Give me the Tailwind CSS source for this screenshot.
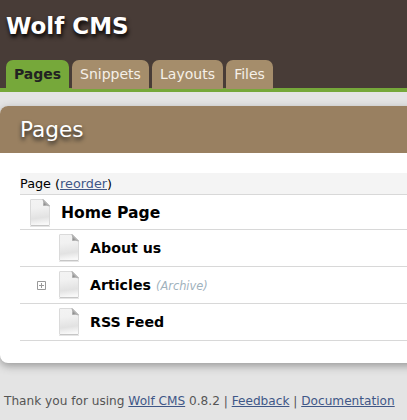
<!DOCTYPE html>
<html lang="en">
<head>
<meta charset="utf-8">
<title>Wolf CMS</title>
<script src="https://cdn.jsdelivr.net/npm/@tailwindcss/browser@4"></script>
</head>
<body class="h-[420px] overflow-hidden bg-[#e4e4e4] font-['DejaVu_Sans',sans-serif] text-black">
<svg class="absolute h-0 w-0">
  <defs>
    <linearGradient id="paper" x1="0" y1="0" x2=".1" y2="1"><stop offset="0" stop-color="#f3f3f3"/><stop offset=".35" stop-color="#f1f1f1"/><stop offset=".75" stop-color="#e2e2e2"/><stop offset="1" stop-color="#f8f8f8"/></linearGradient>
    <linearGradient id="fold" x1="0" y1="1" x2="1" y2="0"><stop offset="0" stop-color="#666"/><stop offset=".4" stop-color="#aaa"/><stop offset=".7" stop-color="#eee"/></linearGradient>
  </defs>
  <symbol id="page" viewBox="0 0 24 30">
    <path d="M2 28.500h20" stroke="#000" stroke-opacity=".1"/>
    <path d="M3 1.500h12.500l6 6v19.500q0 .5-.5.5H3q-.5 0-.5-.5V2q0-.5.5-.5z" fill="url(#paper)" stroke="#dadada"/>
    <path d="M3 27.500h18" stroke="#c6c6c6"/>
    <path d="M15 1.500q1.200 2.500.5 6 3-.6 6 .5z" fill="url(#fold)" stroke="#a8a8a8" stroke-width=".8"/>
  </symbol>
</svg>
<header class="flex h-[92px] flex-col border-b-4 border-[#76a83a] bg-[#483c37]">
  <h1 class="h-[60px] shrink-0 pt-[10px] pl-[6px] text-[23px] leading-[32px] font-bold text-white [text-shadow:1px_3px_4px_#000]">Wolf CMS</h1>
  <nav class="flex h-[29px] shrink-0 gap-[3px] pl-[6px] text-[14px] leading-[29px] text-[#f5f0e8] *:rounded-t-[7px] *:text-center">
    <a class="w-[63px] bg-[#76a83a] font-bold text-[#222]">Pages</a>
    <a class="w-[77px] bg-[#a58d6b]">Snippets</a>
    <a class="w-[71px] bg-[#a58d6b]">Layouts</a>
    <a class="w-[47px] bg-[#a58d6b]">Files</a>
  </nav>
</header>
<main class="mt-[14px] h-[257px] w-[420px] rounded-[8px] bg-white shadow-[0_3px_8px_#999]">
  <h2 class="h-[47px] rounded-t-[8px] bg-[#998061] pl-[20px] text-[21.6px] leading-[47px] text-white [text-shadow:0px_3px_4px_#222]">Pages</h2>
  <div class="ml-[20px] pt-[20px]">
    <div class="h-[22px] border-b border-[#d8d8d8] bg-[#f4f4f4] text-[12.8px] leading-[21px]">Page (<a class="text-[#3f5787] underline">reorder</a>)</div>
    <div class="flex h-[35px] items-center border-b border-[#d8d8d8] pl-[8px]">
      <svg class="mt-[2px] h-[30px] w-[24px]"><use href="#page"/></svg>
      <span class="ml-[9px] pt-[2px] text-[15.6px] leading-[22px] font-bold">Home Page</span>
    </div>
    <div class="flex h-[37px] items-center border-b border-[#d8d8d8] pl-[37px]">
      <svg class="h-[30px] w-[24px]"><use href="#page"/></svg>
      <span class="ml-[9px] text-[14.2px] leading-[20px] font-bold">About us</span>
    </div>
    <div class="flex h-[37px] items-center border-b border-[#d8d8d8] pl-[17px]">
      <svg class="mr-[11px] h-[9px] w-[9px]" viewBox="0 0 9 9" fill="none" stroke="#999"><path d="M.5.5h8v8h-8zM2 4.500h5M4.500 2v5"/></svg>
      <svg class="h-[30px] w-[24px]"><use href="#page"/></svg>
      <span class="ml-[9px] text-[14.2px] leading-[20px] font-bold">Articles</span>
      <em class="ml-[5px] pt-[3px] text-[11.4px] text-[#9fb2bd]">(Archive)</em>
    </div>
    <div class="flex h-[37px] items-center border-b border-[#d8d8d8] pl-[37px]">
      <svg class="h-[30px] w-[24px]"><use href="#page"/></svg>
      <span class="ml-[9px] text-[14.2px] leading-[20px] font-bold">RSS Feed</span>
    </div>
  </div>
</main>
<footer class="mt-[28px] pl-[4px] text-[12.130px] leading-[20px] whitespace-nowrap text-[#555]">Thank you for using <a class="text-[#3f5787] underline">Wolf CMS</a> 0.8.2 | <a class="text-[#3f5787] underline">Feedback</a> | <a class="text-[#3f5787] underline">Documentation</a></footer>
</body>
</html>
